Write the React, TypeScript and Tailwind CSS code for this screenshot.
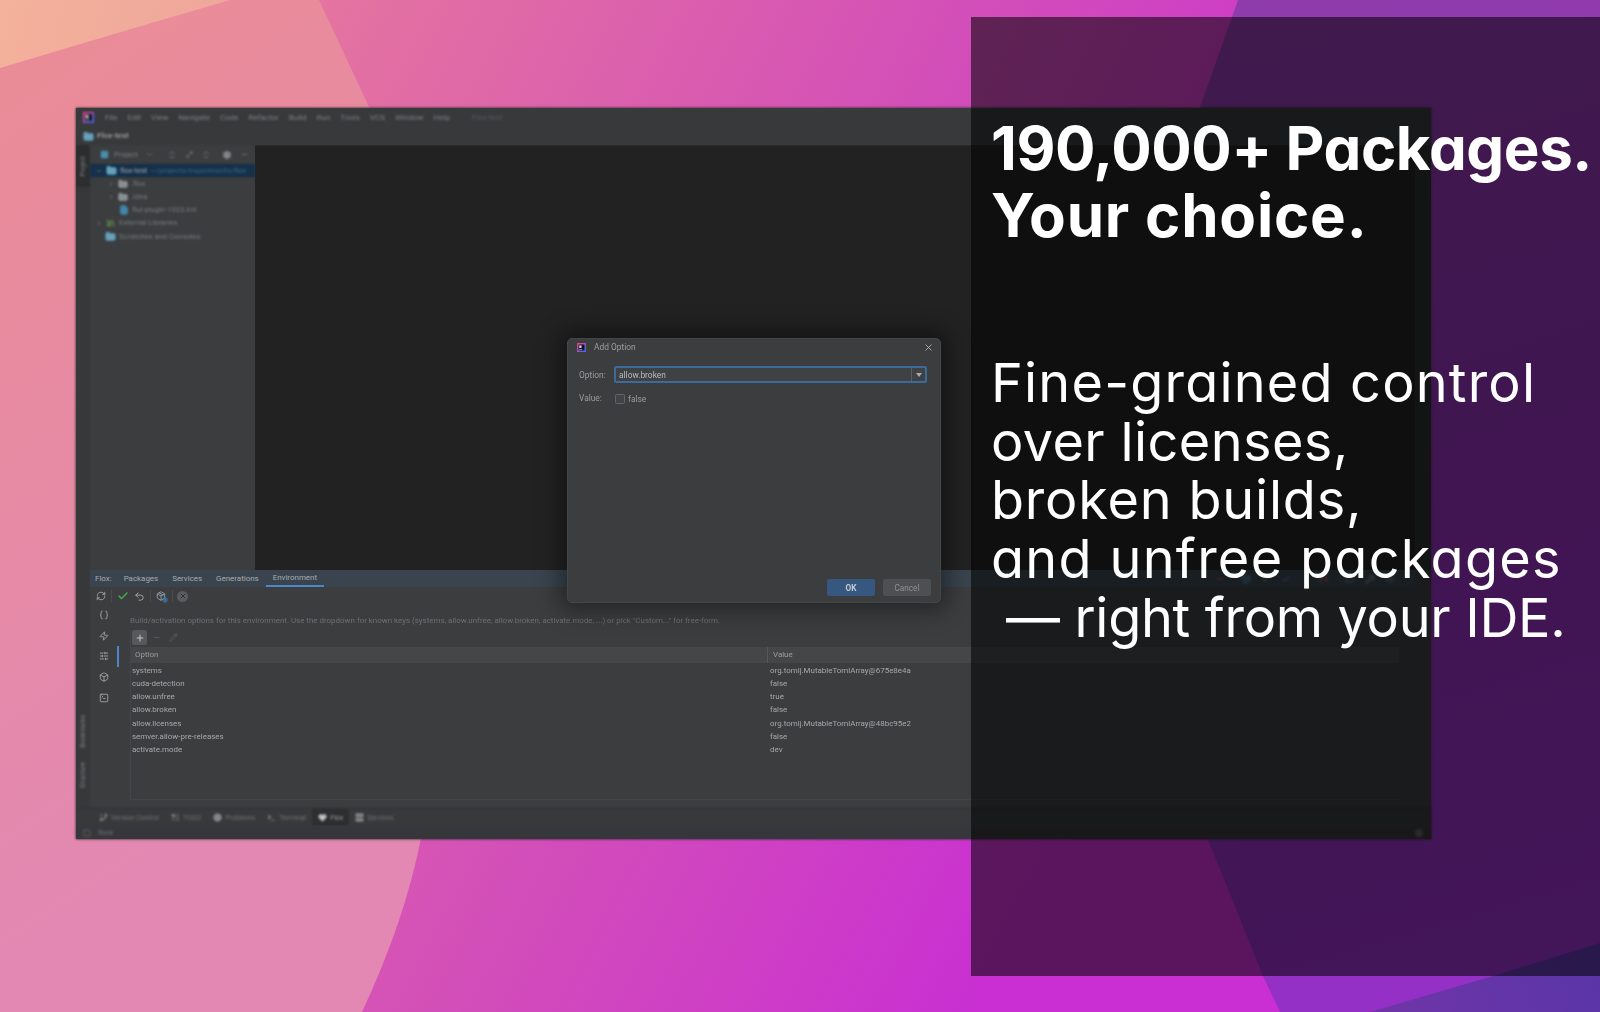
import { Box, Braces, Check, ChevronRight, ChevronDown, Folder, FileText, Minus, Pencil, Plus, RefreshCw, SlidersHorizontal, SquareTerminal, Undo2, X, Zap, Settings, Library, GitBranch, ListTodo, CircleAlert, Terminal, Heart, Server, Wrench, LogOut, ChevronsUpDown, Minimize2, Square, Package } from "lucide-react";

function Wallpaper() {
  return (
    <svg className="absolute inset-0" width="1600" height="1012" viewBox="0 0 1600 1012">
      <defs>
        <linearGradient id="main" gradientUnits="userSpaceOnUse" x1="300" y1="0" x2="1250" y2="500">
          <stop offset="0" stopColor="#e5759f" />
          <stop offset="0.55" stopColor="#d34fb8" />
          <stop offset="1" stopColor="#c92fd2" />
        </linearGradient>
        <linearGradient id="light" gradientUnits="userSpaceOnUse" x1="0" y1="100" x2="400" y2="700">
          <stop offset="0" stopColor="#ea8c98" />
          <stop offset="1" stopColor="#e288b2" />
        </linearGradient>
        <linearGradient id="peach" gradientUnits="userSpaceOnUse" x1="0" y1="0" x2="230" y2="60">
          <stop offset="0" stopColor="#f4b19b" />
          <stop offset="1" stopColor="#eea69b" />
        </linearGradient>
        <linearGradient id="purple" gradientUnits="userSpaceOnUse" x1="1200" y1="0" x2="1500" y2="1012">
          <stop offset="0" stopColor="#8f3cab" />
          <stop offset="0.5" stopColor="#8f30b4" />
          <stop offset="1" stopColor="#9530c8" />
        </linearGradient>
        <linearGradient id="wedge" gradientUnits="userSpaceOnUse" x1="1370" y1="1012" x2="1600" y2="950">
          <stop offset="0" stopColor="#7035a8" />
          <stop offset="1" stopColor="#5a35a8" />
        </linearGradient>
      </defs>
      <rect width="1600" height="1012" fill="url(#main)" />
      <path d="M0 0H319L369 107C420 320 445 600 421 838Q405 920 362 1012H0Z" fill="url(#light)" />
      <path d="M0 0H230Q110 35 0 68Z" fill="url(#peach)" />
      <path d="M1238 0L1200 107C1165 300 1160 600 1208 840L1263 976L1280 1012H1600V0Z" fill="url(#purple)" />
      <path d="M1370 1012L1493 976L1600 943V1012Z" fill="url(#wedge)" />
    </svg>
  );
}

function IdeLogo({ size }: { size: number }) {
  return (
    <svg width={size} height={size} viewBox="0 0 12 12" className="shrink-0">
      <defs>
        <linearGradient id="lg" x1="0" y1="0" x2="1" y2="1">
          <stop offset="0" stopColor="#ff3d7f" />
          <stop offset="1" stopColor="#2f6bff" />
        </linearGradient>
      </defs>
      <rect width="12" height="12" fill="url(#lg)" />
      <rect x="2" y="2" width="8" height="8" fill="#14141c" />
      <rect x="3" y="3.2" width="3" height="3.4" fill="#d8d8e0" />
      <rect x="3" y="8" width="4" height="0.8" fill="#d8d8e0" />
    </svg>
  );
}

const menus = ["File", "Edit", "View", "Navigate", "Code", "Refactor", "Build", "Run", "Tools", "VCS", "Window", "Help"];

const tree = [
  { label: "flox-test", icon: "mod", arrow: "d", indent: 5, extra: "~/projects/experiments/flox", sel: true },
  { label: ".flox", icon: "dir", arrow: "r", indent: 17 },
  { label: ".idea", icon: "dir", arrow: "r", indent: 17 },
  { label: "flui-plugin-1023.iml", icon: "iml", indent: 29 },
  { label: "External Libraries", icon: "lib", arrow: "r", indent: 5 },
  { label: "Scratches and Consoles", icon: "mod", indent: 15 },
];

function TreeIcon({ kind }: { kind: string }) {
  if (kind === "dir") return <Folder size={10} className="text-[#9aa0a3] fill-[#8a8f92] shrink-0" />;
  if (kind === "iml") return <FileText size={10} className="text-[#4b9bc2] fill-[#3b7a9c] shrink-0" />;
  if (kind === "lib") return <Library size={10} className="text-[#6da35a] shrink-0" />;
  return <Folder size={11} className="text-[#4aa7c9] fill-[#6f9fb5] shrink-0" />;
}

const rows: [string, string][] = [
  ["systems", "org.tomlj.MutableTomlArray@675e8e4a"],
  ["cuda-detection", "false"],
  ["allow.unfree", "true"],
  ["allow.broken", "false"],
  ["allow.licenses", "org.tomlj.MutableTomlArray@48bc95e2"],
  ["semver.allow-pre-releases", "false"],
  ["activate.mode", "dev"],
];

const tools = [
  { n: "Version Control", I: GitBranch },
  { n: "TODO", I: ListTodo },
  { n: "Problems", I: CircleAlert },
  { n: "Terminal", I: Terminal },
  { n: "Flox", I: Heart, active: true },
  { n: "Services", I: Server },
];

function Ide() {
  return (
    <div className="absolute left-[76px] top-[108px] w-[1355px] h-[731px] flex flex-col bg-[#3b3d3f] text-[#b0b2b4] text-[7.95px] leading-[12px] [font-family:Roboto,sans-serif] shadow-[0_0_3px_rgba(0,0,0,0.35)]">
      <div className="h-[19px] shrink-0 flex items-center bg-[#37393b] pl-[7px] blur-[1.3px] text-[#7d8082] text-[8px]">
        <IdeLogo size={11} />
        <div className="flex gap-[10px] ml-[11px]">
          {menus.map((m) => (
            <span key={m}>{m}</span>
          ))}
        </div>
        <span className="ml-[22px] text-[#55585a]">Flox-test</span>
      </div>
      <div className="h-[18px] shrink-0 flex items-center gap-[3px] bg-[#37393b] pl-[7px] blur-[1.3px] text-[#9a9d9f] text-[8px] font-semibold">
        <Folder size={11} className="text-[#4aa7c9] fill-[#6f9fb5]" />
        <span>Flox-test</span>
      </div>
      <div className="flex-1 flex min-h-0">
        <div className="w-[14px] shrink-0 flex flex-col justify-between bg-[#36383a] blur-[1.2px] text-[#7d8082] text-[6.5px]">
          <div className="h-[42px] bg-[#2b2d2e] flex items-center justify-center">
            <span className="[writing-mode:vertical-rl] rotate-180">Project</span>
          </div>
          <div className="flex flex-col gap-[14px] items-center pb-[20px]">
            <span className="[writing-mode:vertical-rl] rotate-180">Bookmarks</span>
            <span className="[writing-mode:vertical-rl] rotate-180">Structure</span>
          </div>
        </div>
        <div className="flex-1 min-w-0 flex flex-col">
          <div className="h-[425px] shrink-0 flex">
            <div className="w-[165px] shrink-0 blur-[1.2px] text-[#777a7c] text-[7.6px] overflow-hidden">
              <div className="h-[19px] flex items-center pl-[10px] text-[#7d8082]">
                <Square size={9} className="text-[#4a8fb0] fill-[#4a8fb0]" />
                <span className="ml-[5px]">Project</span>
                <ChevronDown size={9} className="ml-[7px]" />
                <ChevronsUpDown size={10} className="ml-[13px]" />
                <Minimize2 size={9} className="ml-[8px]" />
                <ChevronsUpDown size={10} className="ml-[7px]" />
                <Settings size={10} className="ml-[11px] fill-[#8a8d8f]" />
                <Minus size={9} className="ml-[8px]" />
              </div>
              {tree.map((t) => (
                <div key={t.label} className={`h-[13.2px] flex items-center gap-[3px] whitespace-nowrap ${t.sel ? "bg-[#14304a]" : ""}`} style={{ paddingLeft: t.indent }}>
                  {t.arrow === "d" ? <ChevronDown size={8} className="shrink-0" /> : t.arrow === "r" ? <ChevronRight size={8} className="shrink-0" /> : null}
                  <TreeIcon kind={t.icon} />
                  <span className={t.sel ? "text-[#a5a8aa]" : ""}>{t.label}</span>
                  {t.extra ? <span className="text-[#3f6780]">{t.extra}</span> : null}
                </div>
              ))}
            </div>
            <div className="flex-1 bg-[#222222]" />
          </div>
          <div className="flex-1 min-h-0 flex flex-col blur-[0.3px]">
            <div className="h-[17px] shrink-0 flex items-stretch bg-[#39444e] pl-[5px]">
              <span className="self-center text-[#a8abad]">Flox:</span>
              <div className="flex ml-[5px]">
                {["Packages", "Services", "Generations"].map((t) => (
                  <span key={t} className="self-center px-[7px] text-[#a8abad]">{t}</span>
                ))}
                <span className="flex items-center px-[7px] border-b-2 border-[#4a88c7] text-[#a8abad]">Environment</span>
              </div>
              <div className="ml-auto flex items-center gap-[10px] pr-[20px] blur-[0.8px]">
                <Minus size={10} className="text-[#e05555] mr-[6px]" />
                <Box size={10} className="text-[#5aa3c7]" />
                <Check size={10} className="text-[#5fb865]" />
                <Check size={10} className="text-[#4a9ad8] mr-[18px]" />
                <LogOut size={10} className="text-[#e05555] mr-[6px]" />
                <RefreshCw size={10} className="text-[#777] " />
                <Wrench size={10} className="text-[#999]" />
                <Settings size={10} className="text-[#777]" />
              </div>
            </div>
            <div className="h-[18px] shrink-0 flex items-center pl-[5px] text-[#a9acae]">
              <RefreshCw size={10} className="ml-[1px]" />
              <span className="w-px h-[12px] bg-[#4a4c4e] ml-[5px]" />
              <Check size={12} strokeWidth={3} className="text-[#49a84f] ml-[5px]" />
              <Undo2 size={11} className="ml-[5px]" />
              <span className="w-px h-[12px] bg-[#4a4c4e] ml-[5px]" />
              <span className="relative ml-[5px] w-[11px] h-[11px]">
                <Package size={10} className="text-[#9aa7b3]" />
                <Settings size={6} strokeWidth={3} className="absolute right-[-1px] bottom-[-1px] text-[#3f8fd0]" />
              </span>
              <span className="w-px h-[12px] bg-[#4a4c4e] ml-[5px]" />
              <span className="ml-[4px] w-[11px] h-[11px] rounded-full bg-[#5a5d5f] flex items-center justify-center">
                <X size={8} className="text-[#2f3133]" strokeWidth={3} />
              </span>
            </div>
            <div className="flex-1 min-h-0 flex">
              <div className="w-[29px] shrink-0 flex flex-col text-[#a9acae]">
                {[Braces, Zap, SlidersHorizontal, Box, SquareTerminal].map((I, i) => (
                  <div key={i} className={`h-[20.6px] flex items-center justify-center ${i === 2 ? "border-r-2 border-[#4a88c7]" : "border-r-2 border-transparent"}`}>
                    <I size={10} />
                  </div>
                ))}
              </div>
              <div className="flex-1 min-w-0 ml-[11px] flex flex-col pr-[16px] pt-[10px] pb-[8px]">
                <div className="h-[12px] leading-[12px] text-[#6d7072] whitespace-nowrap">
                  {'Build/activation options for this environment. Use the dropdown for known keys (systems, allow.unfree, allow.broken, activate.mode, ...) or pick "Custom..." for free-form.'}
                </div>
                <div className="flex-1 mt-[3px] flex flex-col border-l border-b border-[#434648]">
                  <div className="h-[15px] shrink-0 flex items-center">
                    <span className="ml-[1px] w-[15px] h-[15px] rounded-[2px] bg-[#55595b] flex items-center justify-center">
                      <Plus size={10} className="text-[#c4c6c8]" strokeWidth={2.5} />
                    </span>
                    <Minus size={9} className="ml-[5px] text-[#5d6062]" />
                    <Pencil size={9} className="ml-[8px] text-[#5d6062]" />
                  </div>
                  <div className="h-[16px] mt-[2px] shrink-0 grid grid-cols-[636px_1fr] bg-[#444648] items-center text-[#9b9ea0]">
                    <span className="pl-[4px]">Option</span>
                    <span className="pl-[5px] h-full flex items-center border-l border-[#55585a]">Value</span>
                  </div>
                  <div className="pt-[1px]">
                    {rows.map(([k, v]) => (
                      <div key={k} className="h-[13.25px] grid grid-cols-[636px_1fr] items-center text-[#a6a9ab]">
                        <span className="pl-[1px]">{k}</span>
                        <span className="pl-[3px]">{v}</span>
                      </div>
                    ))}
                  </div>
                </div>
              </div>
            </div>
          </div>
        </div>
        <div className="w-[16px] shrink-0 flex flex-col">
          <div className="h-[425px] shrink-0 bg-[#2b2d2e]" />
          <div className="flex-1 bg-[#3b3d3f]" />
        </div>
      </div>
      <div className="h-[18px] shrink-0 flex items-stretch pl-[17px] bg-[#37393b] blur-[1.2px] text-[#6f7274] text-[7px] border-t border-[#2f3133]">
        {tools.map(({ n, I, active }) => (
          <div key={n} className={`flex items-center gap-[3px] px-[6px] ${active ? "bg-[#2c2e30] text-[#9b9ea0]" : ""}`}>
            <I size={9} className={active ? "fill-[#c0c2c4] text-[#c0c2c4]" : "fill-[#85888a] text-[#85888a]"} />
            <span>{n}</span>
          </div>
        ))}
      </div>
      <div className="h-[13px] shrink-0 flex items-center pl-[7px] bg-[#35373a] blur-[1.2px] text-[#6f7274] text-[7px]">
        <Square size={8} className="mr-[7px]" />
        <span>flock</span>
        <span className="ml-auto mr-[8px] w-[8px] h-[8px] rounded-full bg-[#5a5d5f]" />
      </div>
    </div>
  );
}

function Dialog() {
  return (
    <div className="absolute left-[567px] top-[338px] w-[374px] h-[265px] rounded-[5px] bg-[#3b3d3f] flex flex-col text-[#9a9d9f] text-[8.4px] leading-[12px] [font-family:Roboto,sans-serif] shadow-[0_0_22px_8px_rgba(0,0,0,0.38)] border border-[#444648]">
      <div className="h-[16px] shrink-0 flex items-center pl-[9px] pr-[6px]">
        <IdeLogo size={9} />
        <span className="ml-[8px]">Add Option</span>
        <X size={11} strokeWidth={1.6} className="ml-auto text-[#c8cacc]" />
      </div>
      <div className="mt-[11px] h-[17px] shrink-0 flex items-center pl-[11px] pr-[13px]">
        <span className="w-[35px] shrink-0">Option:</span>
        <div className="flex-1 h-[17px] flex items-stretch rounded-[2px] border-2 border-[#3d6a9c] bg-[#3f4244]">
          <span className="flex-1 pl-[3px] self-center text-[#b8babc]">allow.broken</span>
          <span className="w-[14px] flex items-center justify-center border-l border-[#5c6063]">
            <span className="w-0 h-0 border-l-[3.5px] border-r-[3.5px] border-t-[4px] border-l-transparent border-r-transparent border-t-[#a9acae]" />
          </span>
        </div>
      </div>
      <div className="mt-[10px] h-[12px] shrink-0 flex items-center pl-[11px]">
        <span className="w-[35px] shrink-0 -mt-[3px]">Value:</span>
        <span className="ml-[1px] w-[10px] h-[10px] rounded-[1.5px] border border-[#626568] bg-[#414446]" />
        <span className="ml-[3px]">false</span>
      </div>
      <div className="mt-auto mb-[6px] flex justify-end gap-[8px] pr-[9px] text-[8.2px]">
        <span className="w-[48px] h-[17px] rounded-[2px] bg-[#365880] flex items-center justify-center font-bold text-[#c6cdd4]">OK</span>
        <span className="w-[48px] h-[17px] rounded-[2px] bg-[#4c5052] flex items-center justify-center text-[#8f9294]">Cancel</span>
      </div>
    </div>
  );
}

function Panel() {
  return (
    <div className="absolute left-[971px] top-[17px] w-[629px] h-[959px] bg-black/55 text-white pl-[20px] [font-family:Inter,sans-serif] [font-feature-settings:'cv11']">
      <h1 className="pt-[98px] text-[60px] leading-[66.5px] font-bold whitespace-nowrap blur-[0.3px]">
        <span className="tracking-[-0.4px]">190,000+ Packages.</span>
        <br />
        <span className="tracking-[0.8px]">Your choice.</span>
      </h1>
      <p className="mt-[106px] text-[54px] leading-[58.7px] font-normal whitespace-nowrap blur-[0.3px]">
        <span className="tracking-[1.2px]">Fine-grained control</span>
        <br />
        <span className="tracking-[0.4px]">over licenses,</span>
        <br />
        <span className="tracking-[0.8px]">broken builds,</span>
        <br />
        <span className="tracking-[1.3px]">and unfree packages</span>
        <br />
        <span className="tracking-[-0.3px]">{"\u00a0\u2014 right from your IDE."}</span>
      </p>
    </div>
  );
}

export default function App() {
  return (
    <div className="relative w-[1600px] h-[1012px] overflow-hidden bg-[#d34fb8]">
      <Wallpaper />
      <Ide />
      <Dialog />
      <Panel />
    </div>
  );
}
